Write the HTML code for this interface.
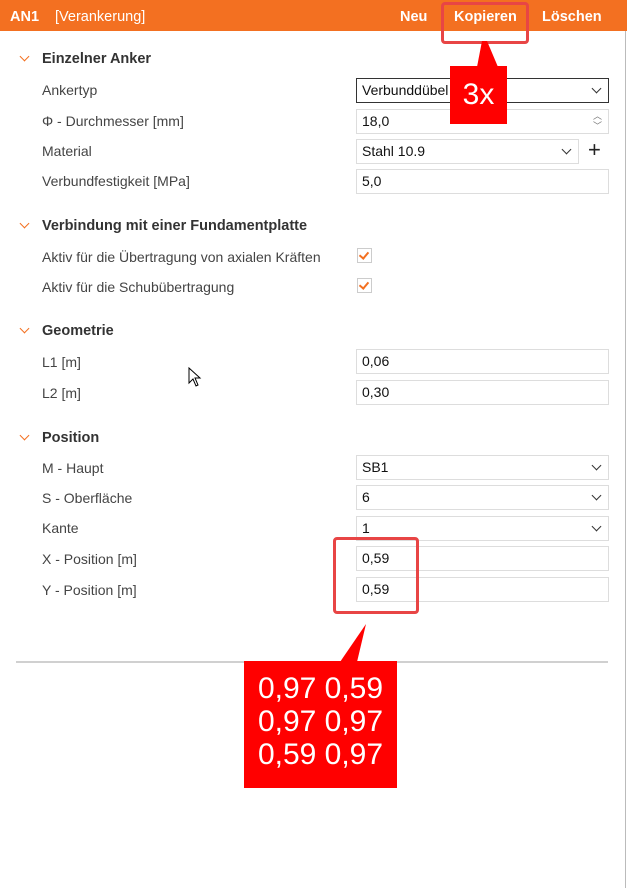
<!DOCTYPE html>
<html><head><meta charset="utf-8"><style>
body{margin:0;width:627px;height:888px;background:#fff;position:relative;overflow:hidden;font-family:"Liberation Sans",sans-serif;}
.a{position:absolute;}
.hdr{left:0;top:0;width:627px;height:31px;background:#f37021;color:#fff;}
.lbl{left:42px;font-size:14px;color:#444;line-height:18px;}
.sec{left:42px;font-size:14.5px;font-weight:bold;color:#333;line-height:18px;}
.chev{left:21px;width:6px;height:6px;border-right:1.3px solid #f37021;border-bottom:1.3px solid #f37021;transform:rotate(45deg);}
.inp{left:356px;width:251px;height:23px;border:1px solid #ddd;font-size:14px;color:#111;line-height:23px;box-sizing:content-box;}
.inp span{position:absolute;left:5px;top:0;}
.dd{position:absolute;right:8px;top:6px;width:6px;height:6px;border-right:1.3px solid #333;border-bottom:1.3px solid #333;transform:rotate(45deg);}
.cb{left:357px;width:13px;height:13px;border:1px solid #ccc;}
</style></head><body>
<div class="a hdr">
<div class="a" style="left:10px;top:9px;font-size:14.5px;font-weight:bold;">AN1</div>
<div class="a" style="left:55px;top:9px;font-size:14.5px;">[Verankerung]</div>
<div class="a" style="left:400px;top:9px;font-size:14.5px;font-weight:bold;">Neu</div>
<div class="a" style="left:454px;top:9px;font-size:14.5px;font-weight:bold;">Kopieren</div>
<div class="a" style="left:542px;top:9px;font-size:14.5px;font-weight:bold;">Löschen</div>
</div>
<div class="a" style="left:625px;top:31px;width:1px;height:857px;background:#bbb"></div>

<div class="a chev" style="top:53px"></div><div class="a sec" style="top:50px">Einzelner Anker</div>
<div class="a lbl" style="top:81px">Ankertyp</div>
<div class="a inp" style="top:78px;border-color:#333"><span>Verbunddübel</span><div class="dd"></div></div>
<div class="a lbl" style="top:112px">Φ - Durchmesser [mm]</div>
<div class="a inp" style="top:109px"><span>18,0</span><div class="a" style="right:6px;top:1px;font-size:9px;color:#777;line-height:10px">︿<br>﹀</div></div>
<div class="a lbl" style="top:142px">Material</div>
<div class="a inp" style="top:139px;width:221px"><span>Stahl 10.9</span><div class="dd"></div></div>
<div class="a" style="left:588px;top:138px;font-size:22px;color:#222;line-height:24px">+</div>
<div class="a lbl" style="top:172px">Verbundfestigkeit [MPa]</div>
<div class="a inp" style="top:169px"><span>5,0</span></div>

<div class="a chev" style="top:220px"></div><div class="a sec" style="top:217px">Verbindung mit einer Fundamentplatte</div>
<div class="a lbl" style="top:248px">Aktiv für die Übertragung von axialen Kräften</div>
<div class="a cb" style="top:248px"><div class="a" style="left:3px;top:1px;width:4px;height:7px;border-right:2px solid #f37021;border-bottom:2px solid #f37021;transform:rotate(40deg)"></div></div>
<div class="a lbl" style="top:278px">Aktiv für die Schubübertragung</div>
<div class="a cb" style="top:278px"><div class="a" style="left:3px;top:1px;width:4px;height:7px;border-right:2px solid #f37021;border-bottom:2px solid #f37021;transform:rotate(40deg)"></div></div>

<div class="a chev" style="top:325px"></div><div class="a sec" style="top:322px">Geometrie</div>
<div class="a lbl" style="top:353px">L1 [m]</div>
<div class="a inp" style="top:349px"><span>0,06</span></div>
<div class="a lbl" style="top:384px">L2 [m]</div>
<div class="a inp" style="top:380px"><span>0,30</span></div>
<svg class="a" style="left:188px;top:367px" width="14" height="20"><path d="M1 1 L1 16 L5 12 L8 19 L10 18 L7 11 L12 11 Z" fill="#fff" stroke="#000" stroke-width="1"/></svg>

<div class="a chev" style="top:432px"></div><div class="a sec" style="top:429px">Position</div>
<div class="a lbl" style="top:459px">M - Haupt</div>
<div class="a inp" style="top:455px"><span>SB1</span><div class="dd"></div></div>
<div class="a lbl" style="top:489px">S - Oberfläche</div>
<div class="a inp" style="top:485px"><span>6</span><div class="dd"></div></div>
<div class="a lbl" style="top:519px">Kante</div>
<div class="a inp" style="top:516px"><span>1</span><div class="dd"></div></div>
<div class="a lbl" style="top:550px">X - Position [m]</div>
<div class="a inp" style="top:546px"><span>0,59</span></div>
<div class="a lbl" style="top:581px">Y - Position [m]</div>
<div class="a inp" style="top:577px"><span>0,59</span></div>

<div class="a" style="left:16px;top:661px;width:592px;height:2px;background:#d0d0d0"></div>

<!-- annotations -->
<div class="a" style="left:441px;top:2px;width:82px;height:36px;border:3px solid #e84545;border-radius:4px"></div>
<svg class="a" style="left:0;top:0" width="627" height="888">
<polygon points="482,41 487,41 498,67 477,67" fill="#f00"/>
<polygon points="366,624 357,662 340,662" fill="#f00"/>
</svg>
<div class="a" style="left:450px;top:66px;width:57px;height:58px;background:#f00;color:#fff;font-size:30px;line-height:58px;text-align:center">3x</div>
<div class="a" style="left:333px;top:537px;width:80px;height:71px;border:3px solid #e84545;border-radius:4px"></div>
<div class="a" style="left:244px;top:661px;width:153px;height:127px;background:#f00;color:#fff;font-size:30px;line-height:33px;padding-top:11px;box-sizing:border-box;text-align:center">0,97 0,59<br>0,97 0,97<br>0,59 0,97</div>
</body></html>
